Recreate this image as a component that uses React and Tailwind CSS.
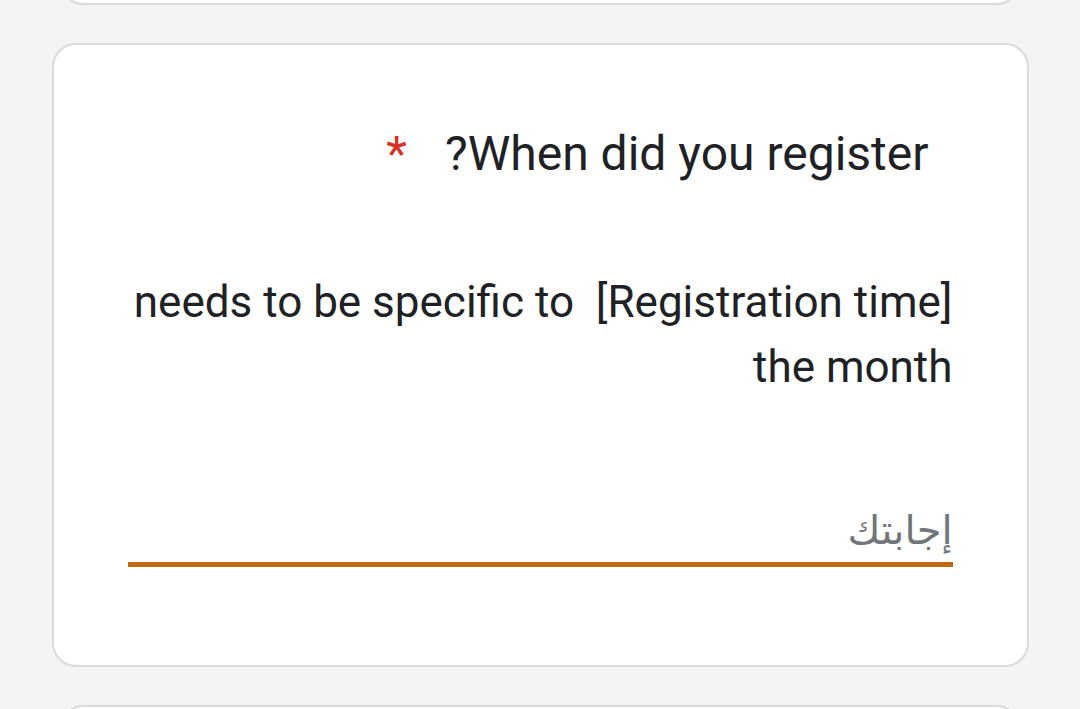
export default function App() {
  return (
    <div
      className="h-[709px] w-[1080px] overflow-hidden bg-[#f4f4f4] flex flex-col items-center"
      style={{ fontFamily: 'Roboto, "DejaVu Sans", sans-serif' }}
    >
      {/* previous question card (only its bottom edge shows) */}
      <div className="mt-[-40px] h-[45px] w-[958px] shrink-0 rounded-[22px] border-2 border-[#dadada] bg-white" />

      {/* current question */}
      <div className="mt-[38px] h-[624px] w-[977px] shrink-0 rounded-[24px] border-2 border-[#dadada] bg-white px-[74px] pt-[82px]">
        <div className="flex justify-end pr-[24px] text-[48px] leading-[54px] text-[#202124]">
          <span className="mr-[38px] text-[#d93025]">*</span>
          <span dir="ltr">?When did you register</span>
        </div>

        <div className="mt-[89px] text-right text-[44px] leading-[65px] text-[#202124] whitespace-pre">
          <div>needs to be specific to  [Registration time]</div>
          <div>the month</div>
        </div>

        <div className="mt-[107px] border-b-[5px] border-[#c16b0f] pb-[7px]">
          <div dir="rtl" className="text-[40px] leading-[48px] text-[#70757a]">
            إجابتك
          </div>
        </div>
      </div>

      {/* next question card (only its top edge shows) */}
      <div className="mt-[38px] h-[60px] w-[958px] shrink-0 rounded-[22px] border-2 border-[#dadada] bg-white" />
    </div>
  )
}
